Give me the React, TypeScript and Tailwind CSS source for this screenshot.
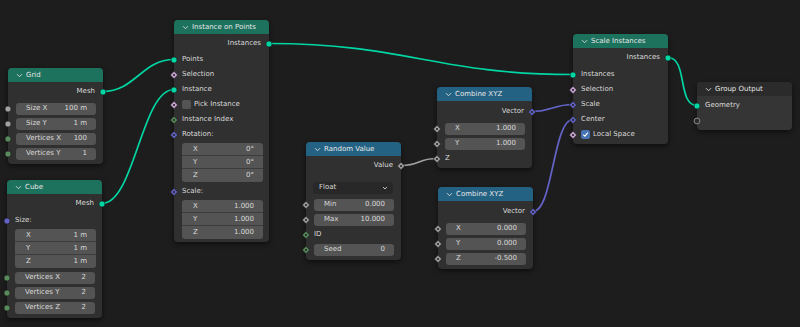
type Kind = "geo" | "float" | "int" | "vec" | "bool" | "empty";

const SOCKET_COLOR: Record<Kind, string> = {
  geo: "#00d6a3",
  float: "#a1a1a1",
  int: "#598c5c",
  vec: "#6363c7",
  bool: "#cca6d6",
  empty: "#2a2a2a",
};

function Socket(props: { kind: Kind; field?: boolean; side: "left" | "right" }) {
  const { kind, field, side } = props;
  const c = SOCKET_COLOR[kind];
  return (
    <svg
      width="8"
      height="8"
      viewBox="0 0 8 8"
      className={
        side === "left"
          ? "absolute left-[-4px] top-1/2 -translate-y-1/2"
          : "absolute right-[-4px] top-1/2 -translate-y-1/2"
      }
    >
      {kind === "empty" ? (
        <circle cx="4" cy="4" r="2.9" fill="#2a2a2a" stroke="#8a8a8a" strokeWidth="1" />
      ) : field ? (
        <>
          <polygon points="4,0.3 7.7,4 4,7.7 0.3,4" fill={c} stroke="#1a1a1a" strokeWidth="0.6" />
          <circle cx="4" cy="4" r="1.1" fill="#222" />
        </>
      ) : (
        <circle cx="4" cy="4" r="3" fill={c} stroke="#1a1a1a" strokeWidth="0.6" />
      )}
    </svg>
  );
}

function Chevron() {
  return (
    <svg width="7" height="5" viewBox="0 0 7 5">
      <path d="M1 1.2 L3.5 3.7 L6 1.2" stroke="#dcdcdc" strokeWidth="0.9" fill="none" />
    </svg>
  );
}

function Node(props: {
  pos: string;
  title: string;
  header: string;
  body?: string;
  children: React.ReactNode;
}) {
  const { pos, title, header, body, children } = props;
  return (
    <div
      className={`absolute w-[95px] rounded-[4px] shadow-[0_2px_5px_rgba(0,0,0,0.55)] ${body ?? "bg-[#303030]"} ${pos}`}
    >
      <div className={`h-[14px] rounded-t-[4px] flex items-center pl-[8px] gap-[3px] ${header}`}>
        <Chevron />
        <span className="text-[7px] leading-none text-[#e6e6e6]">{title}</span>
      </div>
      {children}
    </div>
  );
}

function Out(props: { label: string; kind: Kind; field?: boolean }) {
  return (
    <div className="relative h-[15px] flex items-center justify-end pr-[8px] text-[7px] text-[#dadada]">
      {props.label}
      <Socket kind={props.kind} field={props.field} side="right" />
    </div>
  );
}

function In(props: { label?: string; kind: Kind; field?: boolean; check?: "on" | "off" }) {
  const { label, kind, field, check } = props;
  return (
    <div className="relative h-[15px] flex items-center pl-[8px] gap-[3px] text-[7px] text-[#dadada]">
      <Socket kind={kind} field={field} side="left" />
      {check === "off" && <div className="w-[9px] h-[9px] rounded-[2px] bg-[#545454]" />}
      {check === "on" && (
        <div className="w-[9px] h-[9px] rounded-[2px] bg-[#4772b3] flex items-center justify-center">
          <svg width="7" height="7" viewBox="0 0 7 7">
            <path d="M1.2 3.6 L2.9 5.2 L5.9 1.6" stroke="#fff" strokeWidth="1.2" fill="none" />
          </svg>
        </div>
      )}
      {label}
    </div>
  );
}

function Num(props: { label: string; value: string; kind?: Kind; field?: boolean }) {
  const { label, value, kind, field } = props;
  return (
    <div className="relative h-[15px] flex items-center pl-[8px] pr-[7px] text-[7px] text-[#dadada]">
      {kind && <Socket kind={kind} field={field} side="left" />}
      <div className="flex-1 h-[12px] rounded-[3px] bg-[#545454] flex items-center justify-between pl-[10px] pr-[9px]">
        <span>{label}</span>
        <span>{value}</span>
      </div>
    </div>
  );
}

function Vec(props: { values: [string, string, string]; mt?: string }) {
  const labels = ["X", "Y", "Z"];
  return (
    <div className={`ml-[8px] mr-[6px] rounded-[3px] overflow-hidden bg-[#545454] flex flex-col divide-y divide-[#3c3c3c] ${props.mt ?? "mt-[1px]"}`}>
      {props.values.map((v, i) => (
        <div key={i} className="h-[13px] flex items-center justify-between pl-[11px] pr-[9px] text-[7px] text-[#dadada]">
          <span>{labels[i]}</span>
          <span>{v}</span>
        </div>
      ))}
    </div>
  );
}

function link(x1: number, y1: number, x2: number, y2: number) {
  const d = Math.max(Math.abs(x2 - x1) * 0.45, 20);
  return `M${x1} ${y1} C${x1 + d} ${y1} ${x2 - d} ${y2} ${x2} ${y2}`;
}

export default function App() {
  return (
    <div className="relative w-[800px] h-[327px] overflow-hidden bg-[#1d1d1d] font-['DejaVu_Sans',sans-serif] leading-none">
      <svg width="800" height="327" className="absolute inset-0">
        <g fill="none" strokeWidth="1.7">
          <path d={link(103, 91.5, 174, 59.5)} stroke="#00d6a3" />
          <path d={link(102, 203.5, 174, 89.5)} stroke="#00d6a3" />
          <path d={link(269, 43.5, 573, 74.5)} stroke="#00d6a3" />
          <path d={link(668, 57.5, 697, 105.5)} stroke="#00d6a3" />
          <path d={link(401, 165.5, 437, 158.5)} stroke="#a1a1a1" />
          <path d={link(532, 111.5, 573, 104.5)} stroke="#6363c7" />
          <path d={link(533, 211.5, 573, 119.5)} stroke="#6363c7" />
        </g>
      </svg>

      <Node pos="left-[8px] top-[68px]" title="Grid" header="bg-[#1d725e]">
        <div className="pt-[2px] pb-[3px]">
          <Out label="Mesh" kind="geo" />
          <div className="h-[2px]" />
          <Num label="Size X" value="100 m" kind="float" />
          <Num label="Size Y" value="1 m" kind="float" />
          <Num label="Vertices X" value="100" kind="int" />
          <Num label="Vertices Y" value="1" kind="int" />
        </div>
      </Node>

      <Node pos="left-[7px] top-[180px]" title="Cube" header="bg-[#1d725e]">
        <div className="pt-[2px] pb-[3px]">
          <Out label="Mesh" kind="geo" />
          <div className="h-[2px]" />
          <In label="Size:" kind="vec" />
          <Vec values={["1 m", "1 m", "1 m"]} />
          <div className="h-[2px]" />
          <Num label="Vertices X" value="2" kind="int" />
          <Num label="Vertices Y" value="2" kind="int" />
          <Num label="Vertices Z" value="2" kind="int" />
        </div>
      </Node>

      <Node pos="left-[174px] top-[20px]" title="Instance on Points" header="bg-[#1d725e]">
        <div className="pt-[2px] pb-[3px]">
          <Out label="Instances" kind="geo" />
          <div className="h-[1px]" />
          <In label="Points" kind="geo" />
          <In label="Selection" kind="bool" field />
          <In label="Instance" kind="geo" />
          <In label="Pick Instance" kind="bool" field check="off" />
          <In label="Instance Index" kind="int" field />
          <In label="Rotation:" kind="vec" field />
          <Vec values={["0°", "0°", "0°"]} />
          <div className="h-[2px]" />
          <In label="Scale:" kind="vec" field />
          <Vec values={["1.000", "1.000", "1.000"]} />
        </div>
      </Node>

      <Node pos="left-[306px] top-[142px]" title="Random Value" header="bg-[#246283]">
        <div className="pt-[2px] pb-[3px]">
          <Out label="Value" kind="float" field />
          <div className="h-[7px]" />
          <div className="h-[15px] flex items-center pl-[7px] pr-[8px]">
            <div className="flex-1 h-[12px] rounded-[3px] bg-[#282828] flex items-center justify-between pl-[6px] pr-[5px] text-[7px] text-[#dadada]">
              <span>Float</span>
              <svg width="6" height="4" viewBox="0 0 6 4">
                <path d="M1 1 L3 3 L5 1" stroke="#cfcfcf" strokeWidth="0.9" fill="none" />
              </svg>
            </div>
          </div>
          <div className="h-[2px]" />
          <Num label="Min" value="0.000" kind="float" field />
          <Num label="Max" value="10.000" kind="float" field />
          <In label="ID" kind="int" field />
          <Num label="Seed" value="0" kind="int" field />
        </div>
      </Node>

      <Node pos="left-[437px] top-[87px]" title="Combine XYZ" header="bg-[#246283]">
        <div className="pt-[3px] pb-[2px]">
          <Out label="Vector" kind="vec" field />
          <div className="h-[2px]" />
          <Num label="X" value="1.000" kind="float" field />
          <Num label="Y" value="1.000" kind="float" field />
          <In label="Z" kind="float" field />
        </div>
      </Node>

      <Node pos="left-[438px] top-[187px]" title="Combine XYZ" header="bg-[#246283]">
        <div className="pt-[3px] pb-[3px]">
          <Out label="Vector" kind="vec" field />
          <div className="h-[2px]" />
          <Num label="X" value="0.000" kind="float" field />
          <Num label="Y" value="0.000" kind="float" field />
          <Num label="Z" value="-0.500" kind="float" field />
        </div>
      </Node>

      <Node pos="left-[573px] top-[34px]" title="Scale Instances" header="bg-[#1d725e]">
        <div className="pt-[2px] pb-[2px]">
          <Out label="Instances" kind="geo" />
          <div className="h-[2px]" />
          <In label="Instances" kind="geo" />
          <In label="Selection" kind="bool" field />
          <In label="Scale" kind="vec" field />
          <In label="Center" kind="vec" field />
          <In label="Local Space" kind="bool" field check="on" />
        </div>
      </Node>

      <Node pos="left-[697px] top-[82px]" title="Group Output" header="bg-[#2b2b2b]" body="bg-[#353535]">
        <div className="pt-[2px] pb-[2px]">
          <In label="Geometry" kind="geo" />
          <In kind="empty" />
        </div>
      </Node>
    </div>
  );
}
